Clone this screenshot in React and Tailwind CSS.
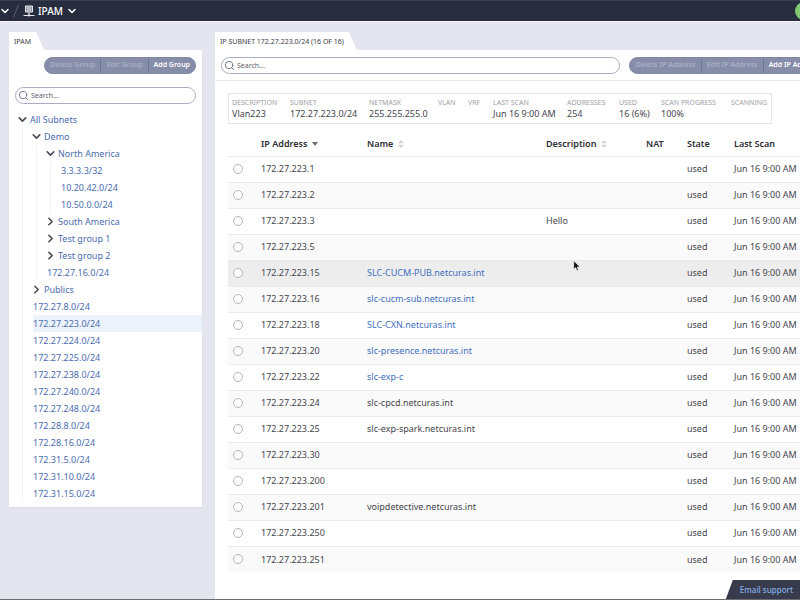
import { useState } from 'react';
import { ChevronDown, ChevronRight, Search } from 'lucide-react';

const tree = {
  label: 'All Subnets',
  open: true,
  children: [
    {
      label: 'Demo',
      open: true,
      children: [
        {
          label: 'North America',
          open: true,
          children: [{ label: '3.3.3.3/32' }, { label: '10.20.42.0/24' }, { label: '10.50.0.0/24' }],
        },
        { label: 'South America', children: [] },
        { label: 'Test group 1', children: [] },
        { label: 'Test group 2', children: [] },
        { label: '172.27.16.0/24' },
      ],
    },
    { label: 'Publics', children: [] },
    { label: '172.27.8.0/24' },
    { label: '172.27.223.0/24' },
    { label: '172.27.224.0/24' },
    { label: '172.27.225.0/24' },
    { label: '172.27.238.0/24' },
    { label: '172.27.240.0/24' },
    { label: '172.27.248.0/24' },
    { label: '172.28.8.0/24' },
    { label: '172.28.16.0/24' },
    { label: '172.31.5.0/24' },
    { label: '172.31.10.0/24' },
    { label: '172.31.15.0/24' },
  ],
};

const summary = [
  ['DESCRIPTION', 'Vlan223'],
  ['SUBNET', '172.27.223.0/24'],
  ['NETMASK', '255.255.255.0'],
  ['VLAN', ''],
  ['VRF', ''],
  ['LAST SCAN', 'Jun 16 9:00 AM'],
  ['ADDRESSES', '254'],
  ['USED', '16 (6%)'],
  ['SCAN PROGRESS', '100%'],
  ['SCANNING', ''],
];

const rows = [
  { ip: '172.27.223.1' },
  { ip: '172.27.223.2' },
  { ip: '172.27.223.3', description: 'Hello' },
  { ip: '172.27.223.5' },
  { ip: '172.27.223.15', name: 'SLC-CUCM-PUB.netcuras.int', link: true, hovered: true },
  { ip: '172.27.223.16', name: 'slc-cucm-sub.netcuras.int', link: true },
  { ip: '172.27.223.18', name: 'SLC-CXN.netcuras.int', link: true },
  { ip: '172.27.223.20', name: 'slc-presence.netcuras.int', link: true },
  { ip: '172.27.223.22', name: 'slc-exp-c', link: true },
  { ip: '172.27.223.24', name: 'slc-cpcd.netcuras.int' },
  { ip: '172.27.223.25', name: 'slc-exp-spark.netcuras.int' },
  { ip: '172.27.223.30' },
  { ip: '172.27.223.200' },
  { ip: '172.27.223.201', name: 'voipdetective.netcuras.int' },
  { ip: '172.27.223.250' },
  { ip: '172.27.223.251' },
];

function Tab({ children }) {
  return (
    <div className="h-[18px] w-fit bg-white pl-[5px] pr-[13px] text-[7px] leading-[19px] text-[#3e4048] [clip-path:polygon(0_0,calc(100%-8px)_0,100%_100%,0_100%)]">
      {children}
    </div>
  );
}

function SearchBox({ label }) {
  return (
    <label className="relative block min-w-0 flex-1">
      <Search className="absolute left-[3px] top-[3px] size-[11px] text-[#6c6f80]" strokeWidth={2} />
      <input
        type="text"
        aria-label={label}
        placeholder="Search..."
        className="block h-[17px] w-full rounded-full border border-[#a9adc2] bg-white pl-[15px] pr-2 text-[7px] text-[#444] outline-none placeholder:text-[#5f6068]"
      />
    </label>
  );
}

function ButtonGroup({ noun }) {
  const base = 'h-full px-[5px] whitespace-nowrap';
  return (
    <div className="flex h-[17px] shrink-0 overflow-hidden rounded-full border border-[#7f86a2] bg-[#868da9] text-[7px] font-semibold">
      <button type="button" disabled className={`${base} text-[#a9afc6]`}>Delete {noun}</button>
      <button type="button" disabled className={`${base} border-l border-[#717896] text-[#a9afc6]`}>Edit {noun}</button>
      <button type="button" className={`${base} border-l border-[#717896] text-white`}>Add {noun}</button>
    </div>
  );
}

function TreeNode({ node, selected, onSelect }) {
  const [open, setOpen] = useState(!!node.open);

  if (!node.children) {
    return (
      <li className={`ml-px h-[17px] leading-[17px] ${selected === node.label ? 'bg-[#edf3fa]' : ''}`}>
        <a href="#" className="block" onClick={() => onSelect(node.label)}>{node.label}</a>
      </li>
    );
  }

  const Chevron = open ? ChevronDown : ChevronRight;
  return (
    <li>
      <div className="flex h-[17px] items-center gap-[3px] leading-[17px]">
        <button type="button" aria-label={`Toggle ${node.label}`} onClick={() => setOpen(!open)}>
          <Chevron className="-m-[2px] size-[13px] text-[#4a4c56]" strokeWidth={3} />
        </button>
        <a href="#">{node.label}</a>
      </div>
      {open && (
        <ul className="ml-[4px] border-l border-[#f1f2f6] pl-[9px]">
          {node.children.map((child) => (
            <TreeNode key={child.label} node={child} selected={selected} onSelect={onSelect} />
          ))}
        </ul>
      )}
    </li>
  );
}

function SortIcon({ active }) {
  if (active) {
    return (
      <svg viewBox="0 0 6 4" className="h-[4px] w-[6px]" fill="#6c6e76">
        <path d="M0 0h6L3 4z" />
      </svg>
    );
  }
  return (
    <svg viewBox="0 0 6 8" className="h-[8px] w-[6px]" fill="#d2d3d7">
      <path d="M0 3.2L3 0l3 3.2zM0 4.8h6L3 8z" />
    </svg>
  );
}

function SortHeader({ label, active }) {
  return (
    <th className="p-0">
      <button type="button" className="flex items-center gap-[5px] font-semibold">
        {label}
        <SortIcon active={active} />
      </button>
    </th>
  );
}

function App() {
  const [selected, setSelected] = useState('172.27.223.0/24');
  const [picked, setPicked] = useState('');

  return (
    <div className="relative h-screen overflow-hidden bg-[#e4e5ee] font-['Noto_Sans',sans-serif] text-[9px] text-[#45464d]">
      <div className="flex h-full min-w-[832px] flex-col">
        <header className="flex h-[21px] shrink-0 items-center justify-between border-t border-[#3a3e50] bg-[#282c3f] pl-px pr-[19px] text-white">
          <div className="flex items-center">
            <button type="button" aria-label="Apps">
              <ChevronDown className="-m-[2px] size-[12px]" strokeWidth={3} />
            </button>
            <svg viewBox="0 0 8 14" className="ml-[3px] h-[14px] w-[8px]" stroke="#565a6c" fill="none">
              <path d="M1.5 13.5L6.5 .5" />
            </svg>
            <svg viewBox="0 0 12 12" className="ml-[3px] size-[12px]" fill="none" stroke="#e8e9ee">
              <path d="M2.5 1h7v6h-7z" fill="#8d909d" />
              <path d="M4 3h4M4 5h4M6 7v2M0.5 10.5h11" />
              <circle cx="6" cy="10.3" r="1.2" fill="#e8e9ee" stroke="none" />
            </svg>
            <span className="ml-[3px] text-[10px] font-medium">IPAM</span>
            <button type="button" aria-label="Switch module" className="ml-[5px]">
              <ChevronDown className="-m-[2px] size-[12px]" strokeWidth={3} />
            </button>
          </div>
          <button type="button" aria-label="Account" className="size-[18px] rounded-full bg-[#80c872]" />
        </header>

        <div className="flex min-h-0 flex-1 items-stretch gap-[13px] border-t border-[#f3f3f8] pl-[9px] pt-[10px]">
          <aside className="w-[193px] shrink-0">
            <Tab>IPAM</Tab>
            <div className="bg-white pb-[5px] pt-[7px] shadow-xs">
              <div className="flex justify-end pr-[6px]">
                <ButtonGroup noun="Group" />
              </div>
              <div className="mt-[13px] flex px-[6px]">
                <SearchBox label="Search subnets" />
              </div>
              <ul className="mt-[7px] pl-[9px] text-[#4a6cb0]">
                <TreeNode node={tree} selected={selected} onSelect={setSelected} />
              </ul>
            </div>
          </aside>

          <section className="flex min-w-0 flex-1 flex-col">
            <Tab>IP SUBNET 172.27.223.0/24 (16 OF 16)</Tab>
            <div className="flex-1 bg-white">
              <div className="flex gap-[9px] border-b border-[#e6e7ec] px-[6px] pb-[6px] pt-[7px]">
                <SearchBox label="Search IP addresses" />
                <ButtonGroup noun="IP Address" />
              </div>

              <div className="px-[13px] pt-[12px]">
                <dl className="grid h-[31px] w-fit grid-cols-[58px_79px_69px_30px_25px_74px_52px_42px_70px_auto] border border-[#e4e4e8] pl-[3px] pr-[4px] pt-[3px]">
                  {summary.map(([label, value]) => (
                    <div key={label} className="whitespace-nowrap">
                      <dt className="text-[7px] leading-[11px] text-[#a0a1a7]">{label}</dt>
                      <dd className="leading-[12px]">{value}</dd>
                    </div>
                  ))}
                </dl>

                <table className="mt-[8px] w-full table-fixed text-left">
                  <colgroup>
                    <col className="w-[33px]" />
                    <col className="w-[106px]" />
                    <col className="w-[179px]" />
                    <col className="w-[100px]" />
                    <col className="w-[41px]" />
                    <col className="w-[47px]" />
                    <col />
                  </colgroup>
                  <thead className="text-[#2c2d33]">
                    <tr className="h-[24px]">
                      <td className="p-0" />
                      <SortHeader label="IP Address" active />
                      <SortHeader label="Name" />
                      <SortHeader label="Description" />
                      <th className="p-0 font-semibold">NAT</th>
                      <th className="p-0 font-semibold">State</th>
                      <th className="p-0 font-semibold">Last Scan</th>
                    </tr>
                  </thead>
                  <tbody>
                    {rows.map((row) => (
                      <tr
                        key={row.ip}
                        className={`h-[26px] border-t border-[#eaeaec] ${row.hovered ? 'bg-[#ededee]' : 'even:bg-[#fafafa]'}`}
                      >
                        <td className="p-0 pl-[5px]">
                          <input
                            type="radio"
                            name="address"
                            aria-label={row.ip}
                            checked={picked === row.ip}
                            onChange={() => setPicked(row.ip)}
                            className="block size-[10px] appearance-none rounded-full border border-[#b3b4b9] bg-white checked:border-[3px]"
                          />
                        </td>
                        <td className="p-0">{row.ip}</td>
                        <td className="p-0">
                          {row.link ? <a href="#" className="text-[#3f6fbf]">{row.name}</a> : row.name}
                        </td>
                        <td className="p-0">{row.description}</td>
                        <td className="p-0" />
                        <td className="p-0">used</td>
                        <td className="p-0">Jun 16 9:00 AM</td>
                      </tr>
                    ))}
                  </tbody>
                </table>
              </div>
            </div>
          </section>
        </div>
      </div>

      <div className="absolute inset-x-0 bottom-0 h-px bg-[#6b6b70]" />
      <a
        href="#"
        className="absolute bottom-px right-0 h-[19px] bg-[#373b4c] pl-[14px] pr-[7px] text-[8px] leading-[19px] font-medium text-[#84b0e8] [clip-path:polygon(7px_0,100%_0,100%_100%,0_100%)]"
      >
        Email support
      </a>

      {/* mouse pointer */}
      <svg viewBox="0 0 8 12" className="absolute left-[573px] top-[260px] h-[12px] w-[8px]" fill="#111" stroke="#fff" strokeWidth="0.5">
        <path d="M.8 .8v8.4l1.9-1.7 1.3 3 1.4-.6-1.3-2.9h2.7z" />
      </svg>
    </div>
  );
}

export default App;
